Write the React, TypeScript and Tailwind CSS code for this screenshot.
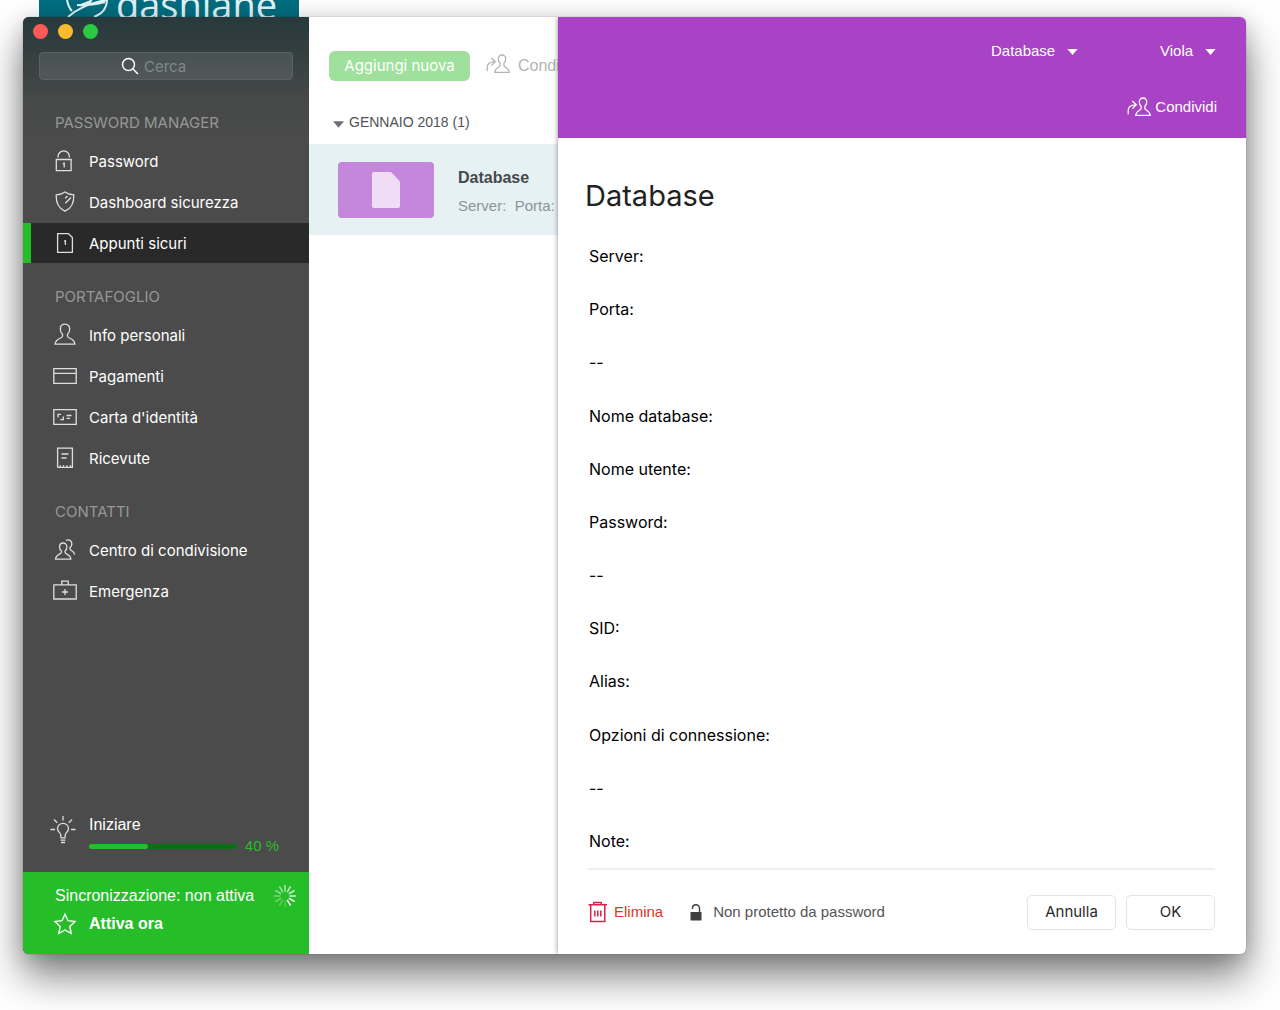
import React from "react";

type IconProps = { className?: string };

const line = {
  fill: "none",
  stroke: "currentColor",
  strokeWidth: 1.3,
} as const;

function PersonIcon({ className }: IconProps) {
  return (
    <svg viewBox="0 0 24 24" className={className} {...line}>
      <path d="M12 1.200c-2.900 0-4.700 2-4.700 4.900 0 2.300.9 4 2.200 5.100v2c0 2.400-7 2-7.400 8h19.800c-.4-6-7.400-5.600-7.400-8v-2c1.300-1.100 2.200-2.800 2.200-5.100 0-2.900-1.800-4.900-4.700-4.900z" />
    </svg>
  );
}

function LockIcon({ className }: IconProps) {
  return (
    <svg viewBox="0 0 24 24" className={className} {...line}>
      <path d="M3.300 10.500h14.800v11.200H3.300zM5 8.500V7.700a5.700 5.900 0 0 1 11.400 0v.8" />
      <path d="M9.800 14.600l1.400-.4v4.300" />
    </svg>
  );
}

function ShieldIcon({ className }: IconProps) {
  return (
    <svg viewBox="0 0 24 24" className={className} {...line}>
      <path d="M12 2c2.600 2 5.500 2.600 8.800 2.900.3 7.500-2 13.500-8.800 16.300C5.200 18.400 2.900 12.400 3.200 4.900 6.500 4.600 9.400 4 12 2z" />
      <path d="M12.300 13.300l5.700-5.800M12.200 8.200l2.300-2.200" />
    </svg>
  );
}

function NoteIcon({ className }: IconProps) {
  return (
    <svg viewBox="0 0 24 24" className={className} {...line}>
      <path d="M4.600 2.600h10.800l4 4v14.800H4.600z" />
      <path d="M11 10.200l1.400-.4v4.300" />
    </svg>
  );
}

function CardIcon({ className }: IconProps) {
  return (
    <svg viewBox="0 0 24 24" className={className} {...line}>
      <path d="M.8 4.600h22.400v14.800H.8zM.8 9.400h22.400" />
    </svg>
  );
}

function IdIcon({ className }: IconProps) {
  return (
    <svg viewBox="0 0 24 24" className={className} {...line}>
      <path d="M.8 4.600h22.400v14.800H.8z" />
      <path d="M5 12.500V9.300h3M10.300 11.500v3.200h-3M13.500 10.500h5M13.500 13.300h3.500" />
    </svg>
  );
}

function ReceiptIcon({ className }: IconProps) {
  return (
    <svg viewBox="0 0 24 24" className={className} {...line}>
      <path d="M4.600 21.400V2.200h14.800v19.200h-2v-2.200M4.600 21.400h2.600v-2.200M7.200 21.400h3.300v-2.200M10.500 21.400h3.400v-2.200M13.900 21.400h3.500" />
      <path d="M8.500 8h7M8.500 12h5" />
    </svg>
  );
}

function PeopleIcon({ className }: IconProps) {
  return (
    <svg viewBox="0 0 24 24" className={className} {...line}>
      <path d="M10.200 5c-2.200 0-3.700 1.600-3.700 3.900 0 1.900.8 3.200 1.900 4.100v1.300c0 2.100-5.600 1.800-5.900 6.900h15.400c-.3-5.100-5.900-4.800-5.900-6.900V13c1.100-.9 1.900-2.200 1.900-4.100 0-2.300-1.500-3.900-3.700-3.900z" />
      <path d="M13 2.300c3-1.300 6 .3 5.800 3.600 0 1.700-.6 2.900-1.700 3.700v1.600c0 1.400 4 1.500 4.600 5.400" />
    </svg>
  );
}

function EmergencyIcon({ className }: IconProps) {
  return (
    <svg viewBox="0 0 24 24" className={className} {...line}>
      <path d="M.8 5.800h22.400v14.200H.8zM8.800 5.800V2.200h6.400v3.600M12 10v6M9 13h6" />
    </svg>
  );
}

function BulbIcon({ className }: IconProps) {
  return (
    <svg viewBox="0 0 26 28" className={className} {...line}>
      <path d="M10.800 21.500v-2.500c0-2-3.300-3-3.300-6.200a5.500 5.500 0 0 1 11 0c0 3.200-3.300 4.200-3.300 6.200v2.500M10.500 21.800h5M10.500 24.200h5M11 26.500h4M13 0v4.500M4 3.500l3.200 3.200M22 3.500l-3.200 3.200M.5 13.500H5M21 13.500h4.500" />
    </svg>
  );
}

function ShareIcon({ className }: IconProps) {
  return (
    <svg viewBox="0 0 24 20" className={className} {...line}>
      <path d="M16 1c-2.300 0-3.700 1.600-3.700 3.900 0 2 .7 3.500 1.800 4.400v2.200c0 2-5 1.800-5.300 6.900h14.400c-.3-5.100-5.300-4.900-5.300-6.900V9.300c1.100-.9 1.800-2.400 1.800-4.400C19.700 2.600 18.300 1 16 1z" />
      <path d="M1.200 17.300v-3.800c0-3.800 2-5.700 7.800-5.700M5.300 4l4 3.800-4 3.800" />
    </svg>
  );
}

function Spinner({ className }: IconProps) {
  return (
    <svg viewBox="0 0 24 24" className={className} stroke="#fff" strokeWidth="1.600" strokeLinecap="round">
      {Array.from({ length: 12 }, (_, i) => (
        <path
          key={i}
          d="M12 1.500v5.500"
          transform={`rotate(${150 - i * 30} 12 12)`}
          opacity={0.95 - i * 0.07}
        />
      ))}
    </svg>
  );
}

function Caret({ className }: IconProps) {
  return (
    <svg viewBox="0 0 12 7" className={className} fill="currentColor">
      <path d="M0 0h12L6 7z" />
    </svg>
  );
}

type Item = {
  label: string;
  Icon: (props: IconProps) => React.ReactElement;
  active?: boolean;
};

const sections: { title: string; items: Item[] }[] = [
  {
    title: "PASSWORD MANAGER",
    items: [
      { label: "Password", Icon: LockIcon },
      { label: "Dashboard sicurezza", Icon: ShieldIcon },
      { label: "Appunti sicuri", Icon: NoteIcon, active: true },
    ],
  },
  {
    title: "PORTAFOGLIO",
    items: [
      { label: "Info personali", Icon: PersonIcon },
      { label: "Pagamenti", Icon: CardIcon },
      { label: "Carta d'identità", Icon: IdIcon },
      { label: "Ricevute", Icon: ReceiptIcon },
    ],
  },
  {
    title: "CONTATTI",
    items: [
      { label: "Centro di condivisione", Icon: PeopleIcon },
      { label: "Emergenza", Icon: EmergencyIcon },
    ],
  },
];

const noteLines = [
  "Server:",
  "Porta:",
  "--",
  "Nome database:",
  "Nome utente:",
  "Password:",
  "--",
  "SID:",
  "Alias:",
  "Opzioni di connessione:",
  "--",
  "Note:",
];

function Sidebar() {
  return (
    <aside className="flex w-[286px] shrink-0 flex-col bg-[#4b4b4b] bg-[linear-gradient(#28393d_0px,#35403f_40px,#454948_80px,#4b4b4b_125px)]">
      <div className="flex gap-[10px] px-[10px] pt-[7px]">
        <button aria-label="Chiudi" className="size-[15px] rounded-full bg-[#fc5b57]" />
        <button aria-label="Riduci" className="size-[15px] rounded-full bg-[#fcbb2f]" />
        <button aria-label="Ingrandisci" className="size-[15px] rounded-full bg-[#2aca42]" />
      </div>
      <label className="mx-4 mt-[13px] flex h-7 items-center rounded-[4px] border border-[#5a6262] bg-white/10 pl-[81px]">
        <svg viewBox="0 0 18 18" className="size-[18px] shrink-0 text-white" fill="none" stroke="currentColor" strokeWidth="1.500">
          <circle cx="7.500" cy="7.500" r="6" />
          <path d="M12 12l5 5" />
        </svg>
        <input
          type="search"
          aria-label="Cerca"
          placeholder="Cerca"
          className="ml-[5px] w-full min-w-0 bg-transparent pt-[2px] text-[15px] leading-5 text-white outline-none placeholder:text-[#7f8888]"
        />
      </label>
      <nav className="flex flex-col gap-6 pt-[33px]">
        {sections.map((s) => (
          <section key={s.title}>
            <h2 className="mb-2 pl-8 text-[15px] leading-5 text-[#979797]">{s.title}</h2>
            <ul className="flex flex-col gap-px">
              {s.items.map(({ label, Icon, active }) => (
                <li key={label}>
                  <a
                    href="#"
                    aria-current={active ? "page" : undefined}
                    className={
                      active
                        ? "flex h-10 items-center gap-3 border-l-8 border-[#26be28] bg-[#292929] pl-[22px] text-[15px] text-white"
                        : "flex h-10 items-center gap-3 pl-[30px] text-[15px] text-white"
                    }
                  >
                    <Icon className="size-6 shrink-0 text-[#dedede]" />
                    <span className="pt-[2px]">{label}</span>
                  </a>
                </li>
              ))}
            </ul>
          </section>
        ))}
      </nav>
      <div className="mt-auto flex gap-[13px] pr-[30px] pb-4 pl-[27px] font-['Liberation_Sans',Arial,sans-serif] text-white">
        <BulbIcon className="mt-[2px] h-7 w-[26px] shrink-0 text-[#dedede]" />
        <div className="flex-1">
          <div className="text-[16px] leading-[22px]">Iniziare</div>
          <div className="flex items-center gap-2">
            <div role="progressbar" aria-label="Iniziare" aria-valuenow={40} className="h-[5px] flex-1 rounded-full bg-[#0a7016]">
              <div className="h-full w-2/5 rounded-full bg-[#26be28]" />
            </div>
            <span className="text-[15px] leading-5 text-[#26be28]">40 %</span>
          </div>
        </div>
      </div>
      <div className="flex flex-col gap-1 bg-[#26be28] pt-[12px] pr-3 pb-[18px] pl-8 font-['Liberation_Sans',Arial,sans-serif] text-[16px] leading-6 text-white">
        <div className="flex items-center justify-between">
          <span>Sincronizzazione: non attiva</span>
          <Spinner className="size-6" />
        </div>
        <a href="#" className="flex items-center gap-3 font-bold">
          <svg viewBox="0 0 24 24" className="-ml-[2px] size-6" {...line} strokeWidth={1.4}>
            <path d="M12 2.200l3 6.500 7 .9-5.200 4.900 1.400 7-6.200-3.500-6.200 3.500 1.400-7L2 9.600l7-.9z" />
          </svg>
          Attiva ora
        </a>
      </div>
    </aside>
  );
}

function NoteList() {
  return (
    <section className="w-[249px] shrink-0 overflow-hidden bg-white font-['Liberation_Sans',Arial,sans-serif]">
      <div className="flex items-center gap-4 pt-[34px] pl-5 whitespace-nowrap">
        <button className="h-[30px] w-[141px] shrink-0 rounded-[6px] bg-[#9fe09c] font-['Inter',sans-serif] text-[15px] text-white">
          Aggiungi nuova
        </button>
        <button className="flex shrink-0 items-center gap-2 text-[16px] text-[#b4b4b4]">
          <ShareIcon className="mb-1 h-5 w-6" />
          Condividi
        </button>
      </div>
      <h2 className="flex items-center gap-[5px] pt-[31px] pl-6 text-[14px] leading-5 text-[#4f5356]">
        <Caret className="mt-1 h-[7px] w-[11px] text-[#6d7073]" />
        GENNAIO 2018 (1)
      </h2>
      <a href="#" className="mt-3 flex h-[91px] items-center gap-6 bg-[#e6f1f4] pl-[29px] whitespace-nowrap">
        <span className="flex h-14 w-24 shrink-0 items-center justify-center rounded-[4px] bg-[#c587db]">
          <svg viewBox="0 0 28 36" className="h-9 w-7 text-[#f0dcf5]" fill="currentColor">
            <path d="M2 0h17l9 9.500V34a2 2 0 0 1-2 2H2a2 2 0 0 1-2-2V2a2 2 0 0 1 2-2z" />
          </svg>
        </span>
        <span className="flex flex-col gap-2 pt-1">
          <strong className="text-[16px] leading-5 text-[#45494c]">Database</strong>
          <span className="text-[15px] leading-5 whitespace-pre text-[#8d9496]">Server:  Porta:</span>
        </span>
      </a>
    </section>
  );
}

type HeaderSelectProps = {
  label: string;
  value: string;
  options: string[];
  className: string;
};

function HeaderSelect({ label, value, options, className }: HeaderSelectProps) {
  return (
    <label className={`relative flex items-center ${className}`}>
      <select aria-label={label} defaultValue={value} className="w-full appearance-none bg-transparent text-[15px] leading-5 text-white outline-none">
        {options.map((o) => (
          <option key={o}>{o}</option>
        ))}
      </select>
      <Caret className="pointer-events-none absolute right-0 mt-[2px] h-[6px] w-[11px] text-white" />
    </label>
  );
}

function Detail() {
  return (
    <main className="relative flex min-w-0 flex-1 flex-col bg-white shadow-[0_0_5px_rgba(0,0,0,0.45)]">
      <header className="flex h-[121px] shrink-0 flex-col items-end justify-between bg-[#a743c4] pt-6 pb-5 font-['Liberation_Sans',Arial,sans-serif] text-white">
        <div className="flex gap-[82px] pr-[30px]">
          <HeaderSelect label="Categoria" value="Database" options={["Database", "Altro"]} className="w-[87px]" />
          <HeaderSelect label="Colore" value="Viola" options={["Viola", "Blu", "Verde"]} className="w-[56px]" />
        </div>
        <button className="mr-[29px] flex items-center gap-1 text-[15px] leading-[22px]">
          <ShareIcon className="h-5 w-6" />
          Condividi
        </button>
      </header>
      <input
        aria-label="Titolo"
        defaultValue="Database"
        className="mt-[38px] ml-[27px] h-10 bg-transparent text-[29px] text-[#222] outline-none"
      />
      <div className="flex flex-1 flex-col justify-between pt-[30px] pb-[17px] pl-[31px] text-[16px] leading-5 text-black">
        {noteLines.map((t, i) => (
          <p key={i}>{t}</p>
        ))}
      </div>
      <footer className="mr-[31px] ml-[30px] flex h-[86px] items-center border-t-2 border-[#efefef] font-['Liberation_Sans',Arial,sans-serif] text-[15px]">
        <button className="flex items-center gap-[6px] text-[#e0351f]">
          <svg viewBox="0 0 20 22" className="h-[22px] w-5 text-[#dc1f4c]" fill="none" stroke="currentColor" strokeWidth="1.500">
            <path d="M.5 3.800h18.500M5.800 3.500V1.500h7.400v2M2.700 4v16.500h14.100V4M6.800 9.500v6M9.800 9.500v6M12.800 9.500v6" />
          </svg>
          Elimina
        </button>
        <button className="ml-[27px] flex items-center gap-[11px] text-[#555]">
          <svg viewBox="0 0 12 17" className="h-[17px] w-3 text-[#3d3d3d]" fill="currentColor">
            <path d="M.5 8h11v8.500H.5z" />
            <path d="M2.500 5V4a3.500 3.200 0 0 1 7 0v5" fill="none" stroke="currentColor" strokeWidth="1.400" />
          </svg>
          Non protetto da password
        </button>
        <div className="ml-auto flex gap-[10px] font-['Inter',sans-serif] text-[#2a2a2a]">
          <button className="h-[35px] w-[89px] rounded-[5px] border border-[#e4e4e4]">Annulla</button>
          <button className="h-[35px] w-[89px] rounded-[5px] border border-[#e4e4e4]">OK</button>
        </div>
      </footer>
    </main>
  );
}

export default function App() {
  return (
    <div className="flex min-h-screen flex-col overflow-hidden bg-white pr-[34px] pb-14 pl-[23px] font-['Inter',sans-serif]">
      <div className="ml-4 flex h-[17px] w-[260px] gap-[7px] overflow-hidden bg-[#026e80] pl-[26px] text-[#e3f5f8]">
        <svg viewBox="0 0 44 17" className="h-[17px] w-11 shrink-0" fill="none" stroke="currentColor" strokeWidth="2">
          <path d="M2 0c1 5 2 8 5 11M3 17C12 9 24 3 41 0M12 5c9 1 20-1 28-3M42 0c0 8-5 14-13 17" />
          <path d="M13 5.500L27 0l-3 5z" fill="currentColor" strokeWidth="1" />
        </svg>
        <span className="-mt-[18px] font-['Open_Sans',sans-serif] text-[38px] leading-[44px]">dashlane</span>
      </div>
      <div className="flex flex-1 overflow-hidden rounded-[6px] shadow-[0_0_1px_rgba(0,0,0,0.6),0_22px_40px_rgba(0,0,0,0.5),0_4px_20px_rgba(0,0,0,0.15)]">
        <Sidebar />
        <NoteList />
        <Detail />
      </div>
    </div>
  );
}
